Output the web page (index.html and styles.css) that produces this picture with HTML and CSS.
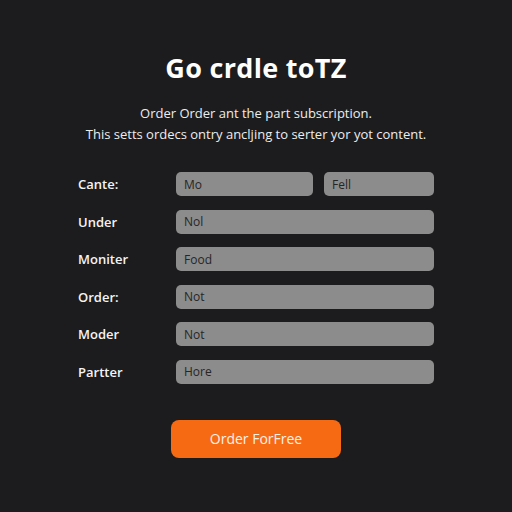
FILE: index.html
```html
<!DOCTYPE html>
<html lang="en">
<head>
    <meta charset="UTF-8">
    <meta name="viewport" content="width=device-width, initial-scale=1.0">
    <title>Go crdle toTZ</title>
    <link rel="stylesheet" href="styles.css">
</head>
<body>

    <main class="page">
        <h1>Go crdle toTZ</h1>
        <p class="intro">
            Order Order ant the part subscription.<br>
            This setts ordecs ontry ancljing to serter yor yot content.
        </p>

        <!-- Order form -->
        <form class="order-form">
            <label>Cante:</label>
            <div class="pair">
                <input type="text" value="Mo">
                <input type="text" value="Fell">
            </div>

            <label>Under</label>
            <input type="text" value="Nol">

            <label>Moniter</label>
            <input type="text" value="Food">

            <label>Order:</label>
            <input type="text" value="Not">

            <label>Moder</label>
            <input type="text" value="Not">

            <label>Partter</label>
            <input type="text" value="Hore">
        </form>

        <button class="order-btn">Order ForFree</button>
    </main>

</body>
</html>
```

FILE: styles.css
```css
body {
    font-family: "Open Sans", Arial, sans-serif;
    background-color: #1c1c1e;
    color: #f2f2f2;
    margin: 0;
    padding: 0;
}

.page {
    display: flex;
    flex-direction: column;
    align-items: center;
    padding-top: 49px;
}

h1 {
    margin: 0;
    font-size: 27px;
    font-weight: 700;
    letter-spacing: 0.3px;
    color: #ffffff;
}

.intro {
    margin: 17px 0 0;
    font-size: 13px;
    line-height: 21px;
    text-align: center;
    color: #ededed;
}

.order-form {
    display: grid;
    grid-template-columns: 98px 258px;
    row-gap: 13.5px;
    align-items: center;
    margin-top: 27px;
}

.order-form label {
    font-size: 13px;
    font-weight: 600;
    color: #f4f4f4;
}

.pair {
    display: grid;
    grid-template-columns: 137px 110px;
    column-gap: 11px;
}

input[type="text"] {
    box-sizing: border-box;
    width: 100%;
    height: 24px;
    padding: 0 8px;
    border: none;
    border-radius: 5px;
    background-color: #8c8c8c;
    color: #262626;
    font-family: "Open Sans", Arial, sans-serif;
    font-size: 12px;
}

.order-btn {
    margin-top: 36px;
    width: 170px;
    height: 38px;
    border: none;
    border-radius: 8px;
    background-color: #f76a14;
    color: #fdf1e6;
    font-family: "Open Sans", Arial, sans-serif;
    font-size: 14px;
    cursor: pointer;
}
```
